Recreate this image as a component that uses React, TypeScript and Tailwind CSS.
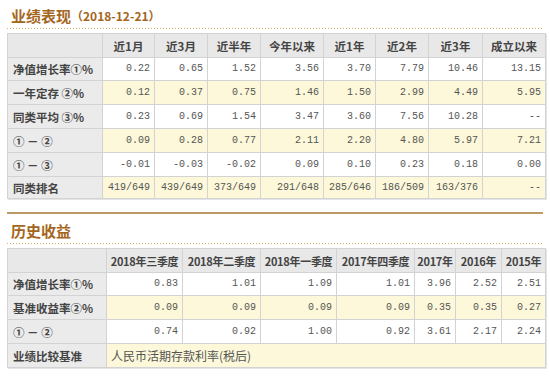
// Fund performance page: two tables (业绩表现 / 历史收益) in the classic
// portal style — brown titles, dotted rule, gray header, alternating rows.

const perfCols = ["近1月", "近3月", "近半年", "今年以来", "近1年", "近2年", "近3年", "成立以来"];
const perfWidths = [95, 52, 53, 53, 63, 52, 53, 54, 63];

const perfRows: { label: string; values: string[]; h: string }[] = [
  { label: "净值增长率①%", values: ["0.22", "0.65", "1.52", "3.56", "3.70", "7.79", "10.46", "13.15"], h: "h-[23px]" },
  { label: "一年定存 ②%", values: ["0.12", "0.37", "0.75", "1.46", "1.50", "2.99", "4.49", "5.95"], h: "h-[24px]" },
  { label: "同类平均 ③%", values: ["0.23", "0.69", "1.54", "3.47", "3.60", "7.56", "10.28", "--"], h: "h-[24px]" },
  { label: "① － ②", values: ["0.09", "0.28", "0.77", "2.11", "2.20", "4.80", "5.97", "7.21"], h: "h-[24px]" },
  { label: "① － ③", values: ["-0.01", "-0.03", "-0.02", "0.09", "0.10", "0.23", "0.18", "0.00"], h: "h-[24px]" },
  { label: "同类排名", values: ["419/649", "439/649", "373/649", "291/648", "285/646", "186/509", "163/376", "--"], h: "h-[22px]" },
];

const histCols = ["2018年三季度", "2018年二季度", "2018年一季度", "2017年四季度", "2017年", "2016年", "2015年"];
const histWidths = [99, 76, 78, 76, 78, 41, 46, 44];

const histRows: { label: string; values: string[] }[] = [
  { label: "净值增长率①%", values: ["0.83", "1.01", "1.09", "1.01", "3.96", "2.52", "2.51"] },
  { label: "基准收益率②%", values: ["0.09", "0.09", "0.09", "0.09", "0.35", "0.35", "0.27"] },
  { label: "① － ②", values: ["0.74", "0.92", "1.00", "0.92", "3.61", "2.17", "2.24"] },
];

const cell = "border border-[#d3d3d3] leading-[14px] whitespace-nowrap";
const labelCell = `${cell} bg-[#ebebeb] pl-[5px] text-left text-[11.5px] font-bold text-[#444]`;
const headCell = `${cell} bg-[#e8e8e8] text-center text-[11.5px] font-bold text-[#444]`;
const histHeadCell = `${cell} bg-[#e8e8e8] text-center text-[11px] font-bold tracking-[-0.3px] text-[#444]`;
const numCell = `${cell} pr-[4px] text-right font-['Liberation_Mono',monospace] text-[10px] text-[#555]`;

function Title({ text, sub }: { text: string; sub?: string }) {
  return (
    <div>
      <div className="flex h-[22px] items-center pl-[4px] text-[#a4661d]">
        <span className="text-[15px] font-bold leading-[18px]">{text}</span>
        {sub && <span className="text-[12px] font-bold leading-[18px]">{sub}</span>}
      </div>
      <div className="mt-[1px] h-px bg-[linear-gradient(to_right,#deaa68_50%,transparent_50%)] bg-[length:3px_1px]" />
    </div>
  );
}

export default function App() {
  return (
    <div className="h-[377px] w-[550px] bg-white px-[7px] pt-[5px] font-['Noto_Sans_CJK_SC','Liberation_Sans',sans-serif]">
      <Title text="业绩表现" sub="（2018-12-21）" />

      <table className="mt-[4px] w-[538px] table-fixed border-collapse shadow-[1px_1px_0_#e4e4e4]">
        <colgroup>
          {perfWidths.map((w, i) => (
            <col key={i} style={{ width: w }} />
          ))}
        </colgroup>
        <thead>
          <tr className="h-[24px]">
            <th className={headCell} />
            {perfCols.map((c) => (
              <th key={c} className={headCell}>
                {c}
              </th>
            ))}
          </tr>
        </thead>
        <tbody>
          {perfRows.map((r, i) => (
            <tr key={r.label} className={`${r.h} ${i % 2 === 0 ? "bg-white" : "bg-[#fcf8d9]"}`}>
              <td className={labelCell}>{r.label}</td>
              {r.values.map((v, j) => (
                <td key={j} className={numCell}>
                  {v}
                </td>
              ))}
            </tr>
          ))}
        </tbody>
      </table>

      <div className="mt-[13px] h-[2px] bg-[#bb9a66]" />
      <div className="mt-[6px]">
        <Title text="历史收益" />
      </div>

      <table className="mt-[4px] w-[538px] table-fixed border-collapse shadow-[1px_1px_0_#e4e4e4]">
        <colgroup>
          {histWidths.map((w, i) => (
            <col key={i} style={{ width: w }} />
          ))}
        </colgroup>
        <thead>
          <tr className="h-[24px]">
            <th className={histHeadCell} />
            {histCols.map((c) => (
              <th key={c} className={histHeadCell}>
                {c}
              </th>
            ))}
          </tr>
        </thead>
        <tbody>
          {histRows.map((r, i) => (
            <tr key={r.label} className={`${i === 0 ? "h-[23px]" : "h-[24px]"} ${i % 2 === 0 ? "bg-white" : "bg-[#fcf8d9]"}`}>
              <td className={labelCell}>{r.label}</td>
              {r.values.map((v, j) => (
                <td key={j} className={numCell}>
                  {v}
                </td>
              ))}
            </tr>
          ))}
          <tr className="h-[24px] bg-[#fcf8d9]">
            <td className={labelCell}>业绩比较基准</td>
            <td colSpan={7} className={`${cell} pl-[4px] text-left text-[12px] text-[#555]`}>
              人民币活期存款利率(税后)
            </td>
          </tr>
        </tbody>
      </table>
    </div>
  );
}
